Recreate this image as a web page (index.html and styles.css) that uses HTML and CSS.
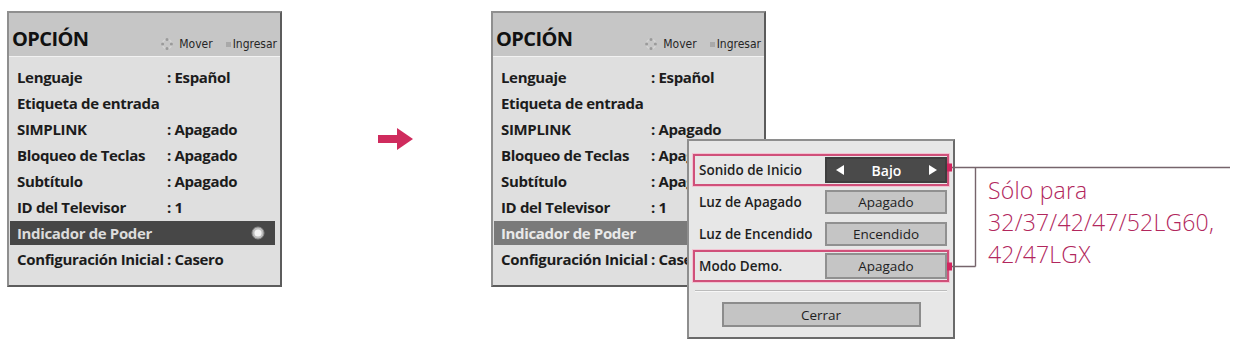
FILE: index.html
```html
<!DOCTYPE html>
<html lang="es">
<head>
<meta charset="utf-8">
<title>Opción – Indicador de Poder</title>
<link rel="stylesheet" href="styles.css">
</head>
<body>
<div class="page">
  <div class="panel">
    <div class="panel-head">
      <span class="title">OPCIÓN</span>
      <span class="hints">
        <span class="hint">
          <svg class="ico-move" viewBox="0 0 12 12" width="12" height="12">
            <circle cx="6" cy="6" r="4.6" fill="none" stroke="#d6d6d6" stroke-width="1.4"/>
            <circle cx="6" cy="1.6" r="1.5" fill="#9a9a9a"/>
            <circle cx="6" cy="10.4" r="1.5" fill="#9a9a9a"/>
            <circle cx="1.6" cy="6" r="1.5" fill="#9a9a9a"/>
            <circle cx="10.4" cy="6" r="1.5" fill="#9a9a9a"/>
          </svg><span>Mover</span>
        </span>
        <span class="hint"><span class="ico-ok"></span><span>Ingresar</span></span>
      </span>
    </div>
    <div class="panel-body">
      <div class="row"><span class="lbl">Lenguaje</span><span class="val">: Español</span></div>
      <div class="row"><span class="lbl">Etiqueta de entrada</span></div>
      <div class="row"><span class="lbl">SIMPLINK</span><span class="val">: Apagado</span></div>
      <div class="row"><span class="lbl">Bloqueo de Teclas</span><span class="val">: Apagado</span></div>
      <div class="row"><span class="lbl">Subtítulo</span><span class="val">: Apagado</span></div>
      <div class="row"><span class="lbl">ID del Televisor</span><span class="val">: 1</span></div>
      <div class="row sel"><span class="lbl">Indicador de Poder</span>
        <svg class="radio" viewBox="0 0 14 14" width="14" height="14">
          <circle cx="7" cy="7" r="6" fill="#bdbdbd" stroke="#8a8a8a" stroke-width="1"/>
          <circle cx="7" cy="7" r="3.6" fill="#f4f4f4"/>
        </svg>
      </div>
      <div class="row"><span class="lbl">Configuración Inicial</span><span class="val">: Casero</span></div>
    </div>
  </div>

  <div class="arrow-col">
    <svg class="arrow" viewBox="0 0 36 22" width="36" height="22">
      <polygon points="0,7 19,7 19,0 35,11 19,22 19,15 0,15" fill="#cf2b5d"/>
    </svg>
  </div>

  <div class="stage">
    <div class="panel">
      <div class="panel-head">
        <span class="title">OPCIÓN</span>
        <span class="hints">
          <span class="hint">
            <svg class="ico-move" viewBox="0 0 12 12" width="12" height="12">
              <circle cx="6" cy="6" r="4.6" fill="none" stroke="#d6d6d6" stroke-width="1.4"/>
              <circle cx="6" cy="1.6" r="1.5" fill="#9a9a9a"/>
              <circle cx="6" cy="10.4" r="1.5" fill="#9a9a9a"/>
              <circle cx="1.6" cy="6" r="1.5" fill="#9a9a9a"/>
              <circle cx="10.4" cy="6" r="1.5" fill="#9a9a9a"/>
            </svg><span>Mover</span>
          </span>
          <span class="hint"><span class="ico-ok"></span><span>Ingresar</span></span>
        </span>
      </div>
      <div class="panel-body">
        <div class="row"><span class="lbl">Lenguaje</span><span class="val">: Español</span></div>
        <div class="row"><span class="lbl">Etiqueta de entrada</span></div>
        <div class="row"><span class="lbl">SIMPLINK</span><span class="val">: Apagado</span></div>
        <div class="row"><span class="lbl">Bloqueo de Teclas</span><span class="val">: Apagado</span></div>
        <div class="row"><span class="lbl">Subtítulo</span><span class="val">: Apagado</span></div>
        <div class="row"><span class="lbl">ID del Televisor</span><span class="val">: 1</span></div>
        <div class="row sel dim"><span class="lbl">Indicador de Poder</span></div>
        <div class="row"><span class="lbl">Configuración Inicial</span><span class="val">: Casero</span></div>
      </div>
    </div>

    <div class="popup">
      <div class="prow hl">
        <span class="plbl">Sonido de Inicio</span>
        <span class="pval dark">
          <svg viewBox="0 0 8 10" width="8" height="10"><polygon points="8,0 8,10 0,5" fill="#ffffff"/></svg>
          <span>Bajo</span>
          <svg viewBox="0 0 8 10" width="8" height="10"><polygon points="0,0 0,10 8,5" fill="#ffffff"/></svg>
        </span>
      </div>
      <div class="prow">
        <span class="plbl">Luz de Apagado</span>
        <span class="pval">Apagado</span>
      </div>
      <div class="prow">
        <span class="plbl">Luz de Encendido</span>
        <span class="pval">Encendido</span>
      </div>
      <div class="prow hl">
        <span class="plbl">Modo Demo.</span>
        <span class="pval">Apagado</span>
      </div>
      <div class="sep"></div>
      <div class="btn">Cerrar</div>
    </div>

    <svg class="callout-lines" viewBox="0 0 290 115" width="290" height="115">
      <path d="M7 6.5 H285 M30.5 6.5 V105.5 M7 105.5 H30.5" fill="none" stroke="#76646b" stroke-width="1.4"/>
      <rect x="2" y="2.5" width="5" height="8" fill="#d2245e"/>
      <rect x="2" y="101.5" width="5" height="8" fill="#d2245e"/>
    </svg>
    <div class="callout-text">Sólo para<br>32/37/42/47/52LG60,<br>42/47LGX</div>
  </div>
</div>
</body>
</html>
```

FILE: styles.css
```css
html, body {
  margin: 0;
  padding: 0;
  background: #ffffff;
}

body {
  font-family: "Open Sans", "Noto Sans", "DejaVu Sans", sans-serif;
  color: #1c1c1c;
  width: 1237px;
  height: 348px;
  overflow: hidden;
}

.page {
  display: flex;
  align-items: flex-start;
  padding: 11px 0 0 7px;
}

/* ---------- menu panel ---------- */
.panel {
  width: 275px;
  height: 276px;
  box-sizing: border-box;
  border: 2px solid #8f8f8f;
  border-right-color: #5c5c5c;
  border-bottom-color: #5c5c5c;
  background: #dfdfdf;
  display: flex;
  flex-direction: column;
}

.panel-head {
  height: 44px;
  box-sizing: border-box;
  background: #c6c6c6;
  border-bottom: 1px solid #f2f2f2;
  display: flex;
  align-items: flex-start;
  padding: 12px 3px 0 3px;
}

.title {
  font-size: 20px;
  font-weight: 700;
  letter-spacing: -0.6px;
  color: #111;
  line-height: 27px;
}

.hints {
  margin-left: auto;
  align-self: flex-end;
  margin-bottom: 5px;
  display: flex;
  align-items: center;
  gap: 13px;
  font-family: "DejaVu Sans Condensed", "Liberation Sans Narrow", "DejaVu Sans", sans-serif;
  font-size: 12px;
  line-height: 14px;
  color: #262626;
  letter-spacing: 0;
}

.hint {
  display: flex;
  align-items: center;
}

.ico-move {
  margin-right: 6px;
}

.ico-ok {
  display: block;
  width: 5px;
  height: 5px;
  background: #a9a9a9;
  margin-right: 2px;
}

.panel-body {
  flex: 1;
  padding: 7px 5px 0 1px;
  display: flex;
  flex-direction: column;
}

.row {
  height: 26px;
  display: flex;
  align-items: center;
  padding-left: 7px;
  font-size: 15px;
  font-weight: 700;
  letter-spacing: -0.35px;
  white-space: nowrap;
}

.lbl {
  flex: 0 0 150px;
}

.row.sel {
  background: #474747;
  color: #dcdcdc;
  height: 24px;
  margin: 1px 0;
}

.row.sel.dim {
  background: #7a7a7a;
  color: #e9e9e9;
}

.radio {
  margin-left: auto;
  margin-right: 10px;
}

/* ---------- arrow ---------- */
.arrow-col {
  width: 209px;
  box-sizing: border-box;
  padding: 117px 0 0 96px;
}

.arrow {
  display: block;
}

/* ---------- right stage ---------- */
.stage {
  position: relative;
  width: 746px;
  height: 337px;
}

.popup {
  position: absolute;
  left: 196px;
  top: 128px;
  width: 268px;
  box-sizing: border-box;
  border: 2px solid #8e8e8e;
  border-right-color: #6a6a6a;
  border-bottom-color: #6a6a6a;
  background: #e7e7e7;
  padding: 13px 4px 10px 4px;
  display: flex;
  flex-direction: column;
}

.prow {
  height: 32px;
  box-sizing: border-box;
  border: 2px solid transparent;
  display: flex;
  align-items: center;
  padding-left: 4px;
  font-size: 13.5px;
  font-weight: 600;
  color: #1e1e1e;
  white-space: nowrap;
}

.prow.hl {
  border-color: #d0507a;
  box-shadow: 0 0 0 1px #f2c3d2;
}

.pval {
  margin-left: auto;
  width: 122px;
  height: 24px;
  box-sizing: border-box;
  background: #c5c5c5;
  border: 2px solid #909090;
  display: flex;
  align-items: center;
  justify-content: center;
  font-weight: 400;
  color: #1e1e1e;
}

.prow.hl .pval {
  height: 26px;
}

.pval.dark {
  background: #4a4a4a;
  border-color: #3e3e3e;
  color: #ffffff;
  font-weight: 600;
  font-size: 14px;
  justify-content: space-between;
  padding: 0 8px 0 9px;
}

.sep {
  border-top: 1px solid #bcbcbc;
  border-bottom: 1px solid #f7f7f7;
  margin: 8px 2px 10px 2px;
}

.btn {
  width: 199px;
  height: 25px;
  box-sizing: border-box;
  margin: 0 auto;
  background: #c4c4c4;
  border: 2px solid #8c8c8c;
  display: flex;
  align-items: center;
  justify-content: center;
  font-size: 13.5px;
  color: #1e1e1e;
}

/* ---------- callout ---------- */
.callout-lines {
  position: absolute;
  left: 454px;
  top: 150px;
}

.callout-text {
  position: absolute;
  left: 497px;
  top: 163px;
  font-size: 23px;
  font-weight: 300;
  line-height: 32px;
  color: #b2275d;
  letter-spacing: 0.2px;
  white-space: nowrap;
}
```
